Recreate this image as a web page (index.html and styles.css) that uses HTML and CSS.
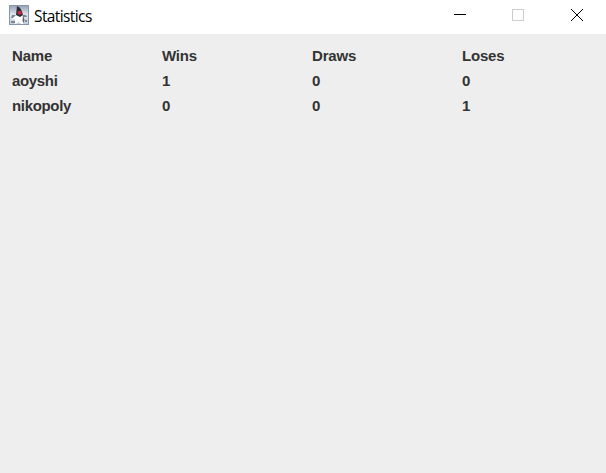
FILE: index.html
```html
<!DOCTYPE html>
<html lang="en">
<head>
<meta charset="utf-8">
<title>Statistics</title>
<link rel="stylesheet" href="styles.css">
</head>
<body>
<div class="window">
  <header class="titlebar">
    <svg class="app-icon" viewBox="0 0 20 20" width="20" height="20">
      <defs><linearGradient id="sky" x1="0" y1="0" x2="0" y2="1"><stop offset="0" stop-color="#93a1b5"/><stop offset=".5" stop-color="#e3e8ee"/><stop offset="1" stop-color="#c4cdd9"/></linearGradient></defs>
      <rect x=".5" y=".5" width="19" height="19" fill="url(#sky)" stroke="#8796ab"/>
      <path d="M3 10H7V12L5 13H2ZM14 10H17L18 12H14ZM2 16H6V18H2ZM16 15H18V17H16Z" fill="#7b8794"/>
      <path d="M3 14L7 10H13L15 15L14 19H12L10 17L6 19V14Z" fill="#fff"/>
      <path d="M8 1C11 2 13 5 14 10L11 12L7 10Z" fill="#292b30"/>
      <path d="M14 10L15.5 15L14.5 18L13.5 16Z" fill="#66605f"/>
      <ellipse cx="10.7" cy="7.7" rx="2.2" ry="2" fill="#c92b43"/>
    </svg>
    <span class="title">Statistics</span>
    <div class="controls">
      <svg class="control" viewBox="0 0 58 34"><path d="M22 14.5H34" stroke="#000"/></svg>
      <svg class="control" viewBox="0 0 58 34"><rect x="22.5" y="9.5" width="11" height="11" fill="none" stroke="#ccc"/></svg>
      <svg class="control" viewBox="0 0 58 34"><path d="M23 9L35 21M35 9L23 21" stroke="#000" fill="none"/></svg>
    </div>
  </header>
  <main class="stats">
    <span>Name</span><span>Wins</span><span>Draws</span><span>Loses</span>
    <span class="player">aoyshi</span><span>1</span><span>0</span><span>0</span>
    <span class="player">nikopoly</span><span>0</span><span>0</span><span>1</span>
  </main>
</div>
</body>
</html>
```
FILE: styles.css
```css
body { margin: 0; }
.window { height: 473px; background: #eee; display: flex; flex-direction: column; overflow: hidden; }
.titlebar { height: 34px; background: #fff; display: flex; }
.app-icon { margin: 5px 5px 0 9px; }
.title { font: 15.5px/33px "Open Sans", sans-serif; color: #000; letter-spacing: -0.6px; }
.controls { margin-left: auto; display: flex; }
.control { width: 58px; height: 34px; }
.stats { display: grid; grid-template-columns: repeat(4, 150px); grid-auto-rows: 25px; padding: 9px 0 0 12px; font: bold 15px/25px "Liberation Sans", sans-serif; letter-spacing: -0.2px; color: #333; }
.player { letter-spacing: -0.33px; }
```
